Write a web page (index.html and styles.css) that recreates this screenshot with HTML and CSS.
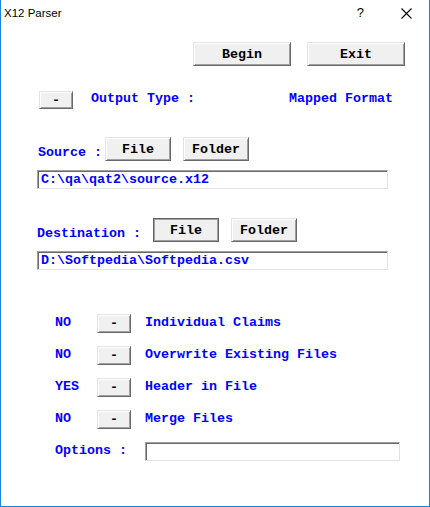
FILE: index.html
```html
<!DOCTYPE html>
<html lang="en">
<head>
    <meta charset="UTF-8">
    <title>X12 Parser</title>
    <link rel="stylesheet" href="styles.css">
</head>
<body>
    <div class="window">
        <div class="titlebar">
            <span class="title">X12 Parser</span>
            <span class="help">?</span>
            <svg class="close" width="11" height="11" viewBox="0 0 11 11">
                <path d="M0.5 0.5 L10.5 10.5 M10.5 0.5 L0.5 10.5" stroke="#000" stroke-width="1.1" fill="none"/>
            </svg>
        </div>

        <div class="row-actions">
            <button class="btn btn-big">Begin</button>
            <button class="btn btn-big">Exit</button>
        </div>

        <div class="row-type">
            <button class="btn btn-toggle">-</button>
            <span class="lbl type-lbl">Output Type :</span>
            <span class="lbl type-val">Mapped Format</span>
        </div>

        <div class="row-path row-source">
            <span class="lbl path-lbl source-lbl">Source :</span>
            <button class="btn btn-path">File</button>
            <button class="btn btn-path">Folder</button>
        </div>
        <div class="field field-path">C:\qa\qat2\source.x12</div>

        <div class="row-path row-dest">
            <span class="lbl path-lbl dest-lbl">Destination :</span>
            <button class="btn btn-path btn-default">File</button>
            <button class="btn btn-path">Folder</button>
        </div>
        <div class="field field-path">D:\Softpedia\Softpedia.csv</div>

        <div class="flags">
            <div class="flag">
                <span class="lbl flag-val">NO</span>
                <button class="btn btn-flag">-</button>
                <span class="lbl flag-name">Individual Claims</span>
            </div>
            <div class="flag">
                <span class="lbl flag-val">NO</span>
                <button class="btn btn-flag">-</button>
                <span class="lbl flag-name">Overwrite Existing Files</span>
            </div>
            <div class="flag">
                <span class="lbl flag-val">YES</span>
                <button class="btn btn-flag">-</button>
                <span class="lbl flag-name">Header in File</span>
            </div>
            <div class="flag">
                <span class="lbl flag-val">NO</span>
                <button class="btn btn-flag">-</button>
                <span class="lbl flag-name">Merge Files</span>
            </div>
            <div class="flag options">
                <span class="lbl options-lbl">Options :</span>
                <div class="field field-options"></div>
            </div>
        </div>
    </div>
</body>
</html>
```

FILE: styles.css
```css
* {
    box-sizing: border-box;
}
body {
    margin: 0;
    background-color: #ffffff;
    font-family: 'Liberation Mono', 'Courier New', monospace;
}
.window {
    width: 430px;
    height: 507px;
    border: 1px solid #1883d7;
    border-top: none;
    background-color: #ffffff;
}
.titlebar {
    height: 30px;
    display: flex;
    align-items: flex-start;
    padding-left: 3px;
}
.title {
    font-family: 'Liberation Sans', Arial, sans-serif;
    font-size: 11.5px;
    line-height: 14px;
    margin-top: 6px;
    color: #000;
}
.help {
    margin-left: auto;
    font-family: 'Liberation Sans', Arial, sans-serif;
    font-size: 13px;
    line-height: 14px;
    margin-top: 6px;
    color: #000;
}
.close {
    margin-left: 37px;
    margin-top: 8px;
    margin-right: 17px;
}

.btn {
    font-family: 'Liberation Mono', 'Courier New', monospace;
    font-weight: bold;
    font-size: 13.33px;
    color: #000;
    background-color: #f0f0f0;
    border: 1px solid;
    border-color: #e3e3e3 #696969 #696969 #e3e3e3;
    box-shadow: inset 1px 1px #ffffff, inset -1px -1px #a0a0a0;
    padding: 0;
    margin: 0;
    line-height: 15px;
}
.btn-default {
    border-color: #646464;
    box-shadow: inset 1px 1px #a0a0a0, inset -1px -1px #a0a0a0;
}
.lbl {
    color: #0000ff;
    font-weight: bold;
    font-size: 13.33px;
    line-height: 15px;
    white-space: pre;
}

.row-actions {
    display: flex;
    justify-content: flex-end;
    gap: 16px;
    padding-right: 24px;
    margin-top: 12px;
}
.btn-big {
    width: 98px;
    height: 24px;
}

.row-type {
    display: flex;
    align-items: flex-start;
    margin-top: 25px;
    padding-left: 38px;
    padding-right: 36px;
}
.btn-toggle {
    width: 34px;
    height: 18px;
}
.type-lbl {
    margin-left: 18px;
}
.type-val {
    margin-left: auto;
}

.row-path {
    display: flex;
    align-items: flex-start;
    padding-left: 36px;
    gap: 12px;
}
.row-source {
    margin-top: 28px;
    gap: 0;
}
.row-source .btn-path + .btn-path {
    margin-left: 12px;
}
.row-dest {
    margin-top: 29px;
}
.path-lbl {
    padding-top: 8px;
}
.source-lbl {
    margin-left: 1px;
    width: 67px;
}
.btn-path {
    width: 66px;
    height: 24px;
}

.field {
    border: 1px solid;
    border-color: #a0a0a0 #e3e3e3 #e3e3e3 #a0a0a0;
    box-shadow: inset 1px 1px #696969;
    background-color: #ffffff;
    color: #0000ff;
    font-weight: bold;
    font-size: 13.33px;
    line-height: 15px;
    height: 19px;
    white-space: pre;
}
.field-path {
    width: 351px;
    margin-left: 36px;
    margin-top: 9px;
    padding: 1px 3px;
}

.flags {
    display: flex;
    flex-direction: column;
    gap: 13px;
    margin-top: 44px;
    padding-left: 54px;
}
.flag {
    display: flex;
    align-items: flex-start;
}
.flag-val {
    width: 42px;
    padding-top: 1px;
}
.btn-flag {
    width: 34px;
    height: 19px;
}
.flag-name {
    margin-left: 14px;
    padding-top: 1px;
}
.options-lbl {
    width: 90px;
    padding-top: 1px;
}
.field-options {
    width: 255px;
}
```
